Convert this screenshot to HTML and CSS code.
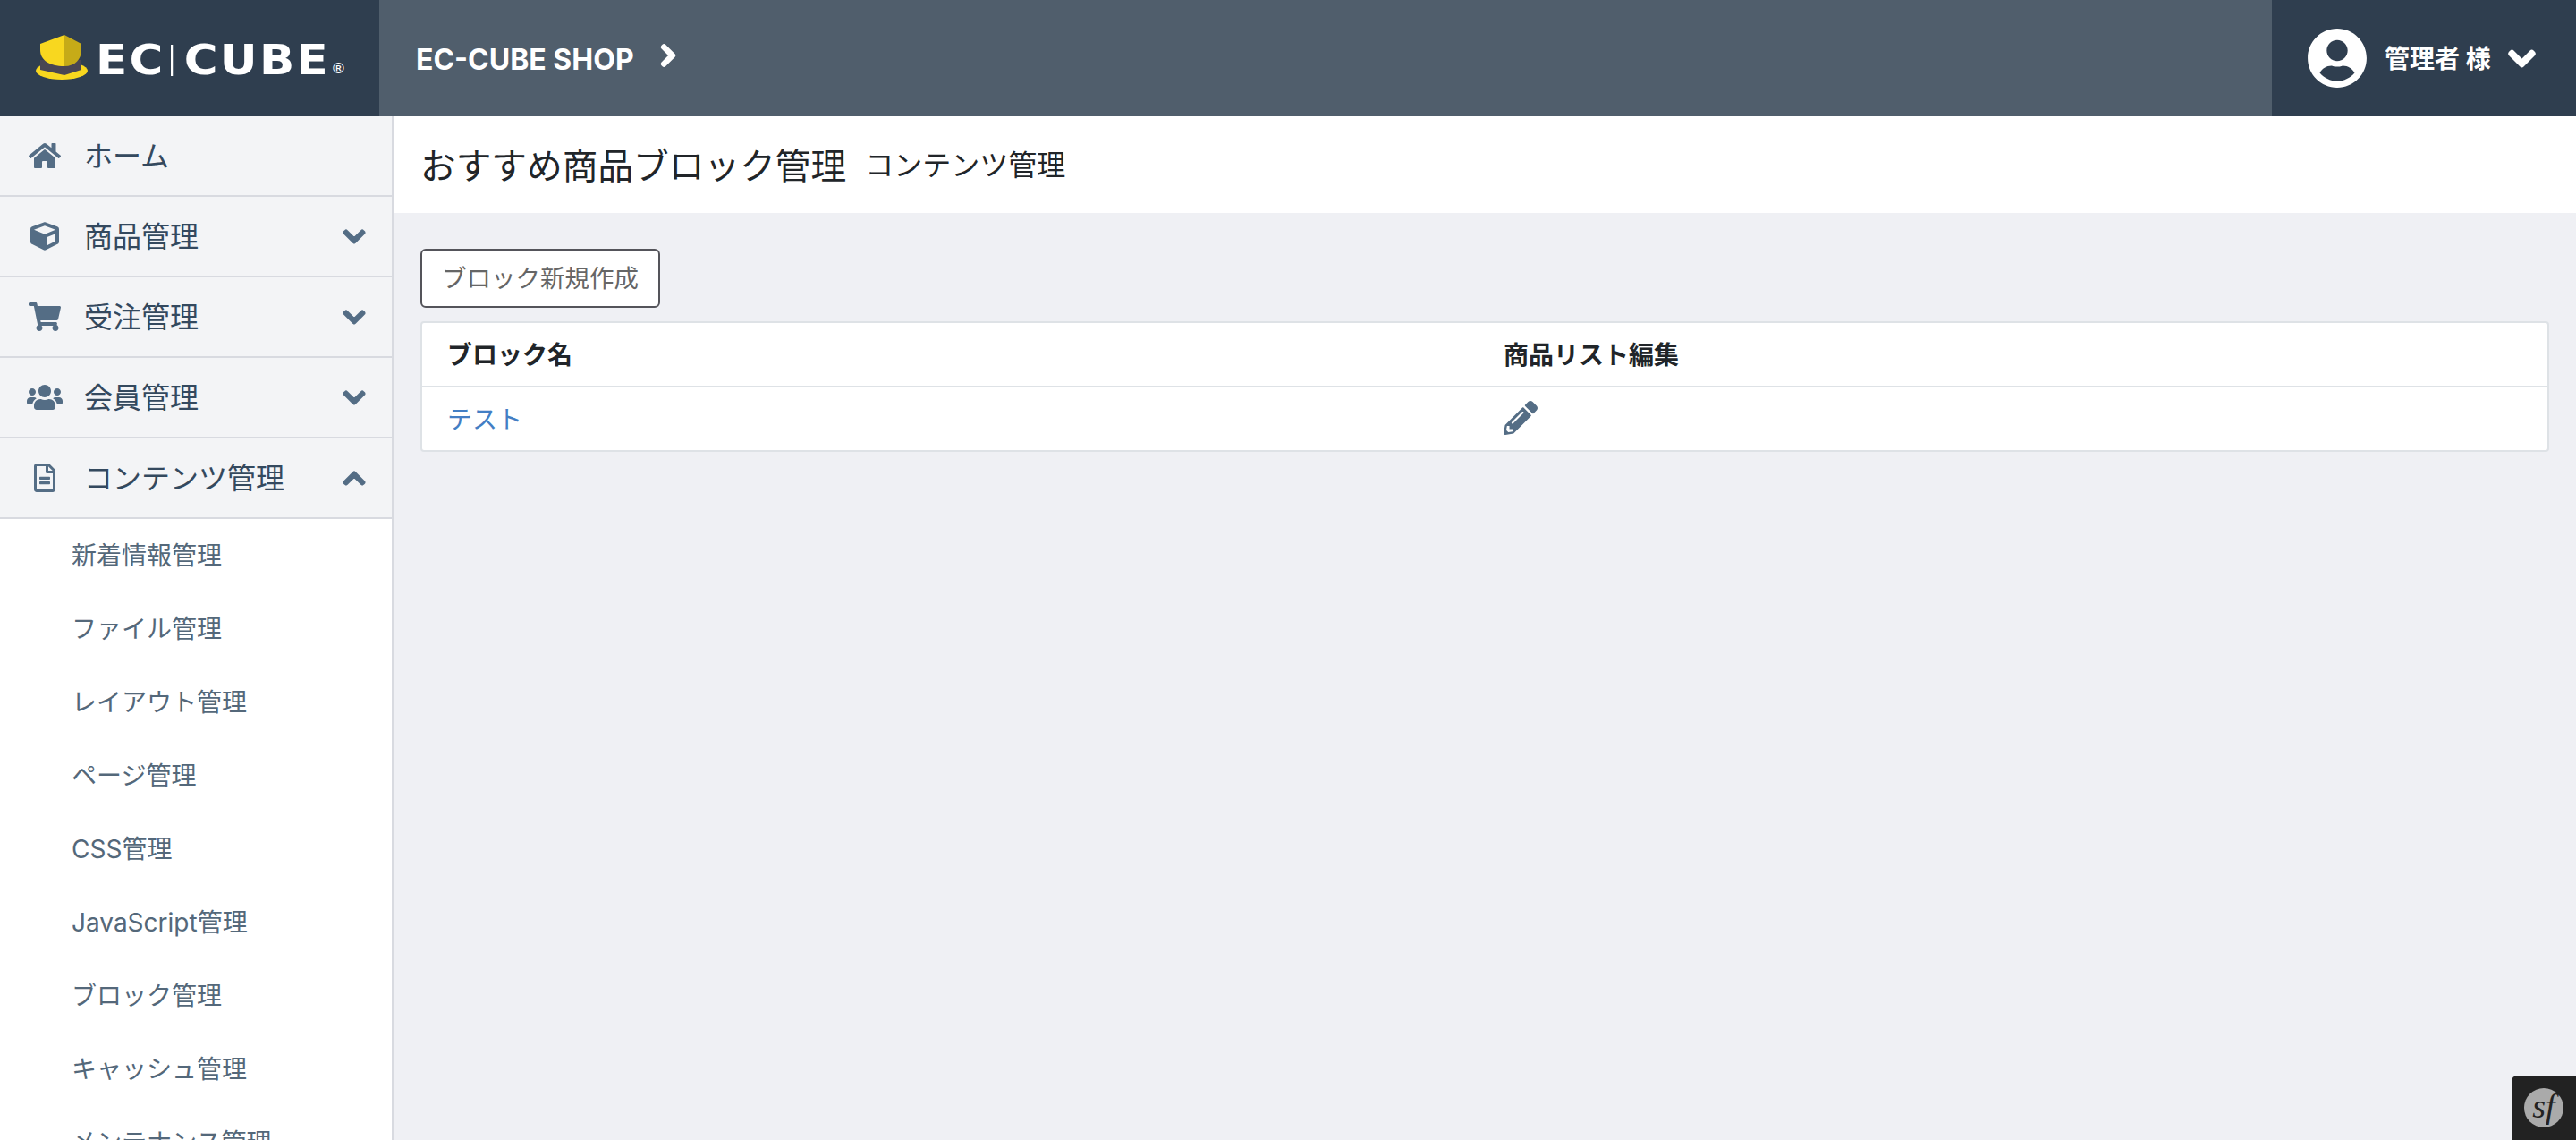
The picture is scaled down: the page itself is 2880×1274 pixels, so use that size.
FILE: index.html
```html
<!DOCTYPE html>
<html lang="ja">
<head>
  <meta charset="UTF-8" />
  <meta name="viewport" content="width=device-width, initial-scale=1.0"/>
  <title>おすすめ商品ブロック管理</title>

  <link rel="stylesheet" href="styles.css">
</head>
<body>

  <header class="topbar">
    <a class="brand" href="#">
      <svg class="brand-hat" viewBox="0 0 58 50">
        <ellipse cx="29" cy="40" rx="29" ry="10" fill="#f8d71f"/>
        <path d="M5 28h46v11l-19 6-27-6z" fill="#4a4653"/>
        <path d="M5 10 32 0v35C15 35 5 28 5 17z" fill="#f8d71f"/>
        <path d="M32 0l19 10v7c0 10-7 18-19 18z" fill="#c6ab18"/>
      </svg>
      <span class="brand-name">EC<i class="brand-bar"></i>CUBE<sup>®</sup></span>
    </a>
    <a class="shop" href="#">
      <span>EC-CUBE SHOP</span>
      <svg class="shop-arrow" viewBox="0 0 320 512"><path d="M285.476 272.971L91.132 467.314c-9.373 9.373-24.569 9.373-33.941 0l-22.667-22.667c-9.357-9.357-9.375-24.522-.04-33.901L188.505 256 34.484 101.255c-9.335-9.379-9.317-24.544.04-33.901l22.667-22.667c9.373-9.373 24.569-9.373 33.941 0L285.475 239.03c9.373 9.372 9.373 24.568.001 33.941z"/></svg>
    </a>
    <a class="account" href="#">
      <svg class="account-icon" viewBox="0 0 496 512"><path d="M248 8C111 8 0 119 0 256s111 248 248 248 248-111 248-248S385 8 248 8zm0 96c48.6 0 88 39.4 88 88s-39.4 88-88 88-88-39.4-88-88 39.4-88 88-88zm0 344c-58.7 0-111.3-26.6-146.5-68.2 18.8-35.4 55.6-59.8 98.5-59.8 2.4 0 4.8.4 7.1 1.1 13 4.2 26.6 6.9 40.9 6.9 14.3 0 28-2.7 40.9-6.9 2.3-.7 4.7-1.1 7.1-1.1 42.9 0 79.7 24.4 98.5 59.8C359.3 421.4 306.7 448 248 448z"/></svg>
      <span>管理者 様</span>
      <svg class="account-arrow" viewBox="0 0 448 512"><path d="M207.029 381.476L12.686 187.132c-9.373-9.373-9.373-24.569 0-33.941l22.667-22.667c9.357-9.357 24.522-9.375 33.901-.04L224 284.505l154.745-154.021c9.379-9.335 24.544-9.317 33.901.04l22.667 22.667c9.373 9.373 9.373 24.569 0 33.941L240.971 381.476c-9.373 9.372-24.569 9.372-33.942 0z"/></svg>
    </a>
  </header>

  <div class="layout">
    <nav class="sidebar">
      <a class="nav-item" href="#">
        <span class="nav-icon"><svg width="36" height="32" viewBox="0 0 576 512"><path d="M280.37 148.26L96 300.11V464a16 16 0 0 0 16 16l112.06-.29a16 16 0 0 0 15.92-16V368a16 16 0 0 1 16-16h64a16 16 0 0 1 16 16v95.64a16 16 0 0 0 16 16.05L464 480a16 16 0 0 0 16-16V300L295.67 148.26a12.19 12.19 0 0 0-15.3 0zM571.6 251.47L488 182.56V44.05a12 12 0 0 0-12-12h-56a12 12 0 0 0-12 12v72.61L318.47 43a48 48 0 0 0-61 0L4.34 251.47a12 12 0 0 0-1.6 16.9l25.5 31A12 12 0 0 0 45.15 301l235.22-193.74a12.19 12.19 0 0 1 15.3 0L530.9 301a12 12 0 0 0 16.9-1.6l25.5-31a12 12 0 0 0-1.7-16.93z"/></svg></span>
        <span class="nav-label">ホーム</span>
      </a>
      <a class="nav-item" href="#">
        <span class="nav-icon"><svg width="32" height="32" viewBox="0 0 512 512"><path d="M239.1 6.3l-208 78c-18.7 7-31.1 25-31.1 45v225.1c0 18.2 10.3 34.8 26.5 42.9l208 104c13.5 6.8 29.4 6.8 42.9 0l208-104c16.3-8.1 26.5-24.8 26.5-42.9V129.3c0-20-12.4-37.9-31.1-44.9l-208-78C262 2.2 250 2.2 239.1 6.3zM256 68.4l192 72v1.1l-192 78-192-78v-1.1l192-72zm32 356V275.5l160-65v133.9l-160 80z"/></svg></span>
        <span class="nav-label">商品管理</span>
        <svg class="nav-arrow" viewBox="0 0 448 512"><path d="M207.029 381.476L12.686 187.132c-9.373-9.373-9.373-24.569 0-33.941l22.667-22.667c9.357-9.357 24.522-9.375 33.901-.04L224 284.505l154.745-154.021c9.379-9.335 24.544-9.317 33.901.04l22.667 22.667c9.373 9.373 9.373 24.569 0 33.941L240.971 381.476c-9.373 9.372-24.569 9.372-33.942 0z"/></svg>
      </a>
      <a class="nav-item" href="#">
        <span class="nav-icon"><svg width="36" height="32" viewBox="0 0 576 512"><path d="M528.12 301.319l47.273-208C578.806 78.301 567.391 64 551.99 64H159.208l-9.166-44.81C147.758 8.021 137.93 0 126.529 0H24C10.745 0 0 10.745 0 24v16c0 13.255 10.745 24 24 24h69.883l70.248 343.435C147.325 417.1 136 435.222 136 456c0 30.928 25.072 56 56 56s56-25.072 56-56c0-15.674-6.447-29.835-16.824-40h209.647C430.447 426.165 424 440.326 424 456c0 30.928 25.072 56 56 56s56-25.072 56-56c0-22.172-12.888-41.332-31.579-50.405l5.517-24.276c3.413-15.018-8.002-29.319-23.403-29.319H218.117l-6.545-32h293.145c11.206 0 20.92-7.754 23.403-18.681z"/></svg></span>
        <span class="nav-label">受注管理</span>
        <svg class="nav-arrow" viewBox="0 0 448 512"><path d="M207.029 381.476L12.686 187.132c-9.373-9.373-9.373-24.569 0-33.941l22.667-22.667c9.357-9.357 24.522-9.375 33.901-.04L224 284.505l154.745-154.021c9.379-9.335 24.544-9.317 33.901.04l22.667 22.667c9.373 9.373 9.373 24.569 0 33.941L240.971 381.476c-9.373 9.372-24.569 9.372-33.942 0z"/></svg>
      </a>
      <a class="nav-item" href="#">
        <span class="nav-icon"><svg width="40" height="32" viewBox="0 0 640 512"><path d="M96 224c35.3 0 64-28.7 64-64s-28.7-64-64-64-64 28.7-64 64 28.7 64 64 64zm448 0c35.3 0 64-28.7 64-64s-28.7-64-64-64-64 28.7-64 64 28.7 64 64 64zm32 32h-64c-17.6 0-33.5 7.1-45.1 18.6 40.3 22.1 68.9 62 75.1 109.4h66c17.7 0 32-14.3 32-32v-32c0-35.3-28.7-64-64-64zm-256 0c61.9 0 112-50.1 112-112S381.9 32 320 32 208 82.1 208 144s50.1 112 112 112zm76.8 32h-8.3c-20.8 10-43.9 16-68.5 16s-47.6-6-68.5-16h-8.3C179.6 288 128 339.6 128 403.2V432c0 26.5 21.5 48 48 48h288c26.5 0 48-21.5 48-48v-28.8c0-63.6-51.6-115.2-115.2-115.2zm-223.7-13.4C161.5 263.1 145.6 256 128 256H64c-35.3 0-64 28.7-64 64v32c0 17.7 14.3 32 32 32h65.9c6.3-47.4 34.9-87.3 75.2-109.4z"/></svg></span>
        <span class="nav-label">会員管理</span>
        <svg class="nav-arrow" viewBox="0 0 448 512"><path d="M207.029 381.476L12.686 187.132c-9.373-9.373-9.373-24.569 0-33.941l22.667-22.667c9.357-9.357 24.522-9.375 33.901-.04L224 284.505l154.745-154.021c9.379-9.335 24.544-9.317 33.901.04l22.667 22.667c9.373 9.373 9.373 24.569 0 33.941L240.971 381.476c-9.373 9.372-24.569 9.372-33.942 0z"/></svg>
      </a>
      <a class="nav-item" href="#">
        <span class="nav-icon"><svg width="24" height="32" viewBox="0 0 384 512"><path d="M288 248v28c0 6.6-5.4 12-12 12H108c-6.6 0-12-5.4-12-12v-28c0-6.6 5.4-12 12-12h168c6.6 0 12 5.4 12 12zm-12 72H108c-6.6 0-12 5.4-12 12v28c0 6.6 5.4 12 12 12h168c6.6 0 12-5.4 12-12v-28c0-6.6-5.4-12-12-12zm108-188.1V464c0 26.5-21.5 48-48 48H48c-26.5 0-48-21.5-48-48V48C0 21.5 21.5 0 48 0h204.1C264.8 0 277 5.1 286 14.1L369.9 98c9 8.9 14.1 21.2 14.1 33.9zm-128-80V128h76.1L256 51.9zM336 464V176H232c-13.3 0-24-10.7-24-24V48H48v416h288z"/></svg></span>
        <span class="nav-label">コンテンツ管理</span>
        <svg class="nav-arrow" viewBox="0 0 448 512"><path d="M240.971 130.524l194.343 194.343c9.373 9.373 9.373 24.569 0 33.941l-22.667 22.667c-9.357 9.357-24.522 9.375-33.901.04L224 227.495 69.255 381.516c-9.379 9.335-24.544 9.317-33.901-.04l-22.667-22.667c-9.373-9.373-9.373-24.569 0-33.941L207.03 130.525c9.372-9.373 24.568-9.373 33.941-.001z"/></svg>
      </a>
      <ul class="subnav">
        <li><a href="#">新着情報管理</a></li>
        <li><a href="#">ファイル管理</a></li>
        <li><a href="#">レイアウト管理</a></li>
        <li><a href="#">ページ管理</a></li>
        <li><a href="#">CSS管理</a></li>
        <li><a href="#">JavaScript管理</a></li>
        <li><a href="#">ブロック管理</a></li>
        <li><a href="#">キャッシュ管理</a></li>
        <li><a href="#">メンテナンス管理</a></li>
      </ul>
    </nav>

    <main class="main">
      <div class="page-header">
        <h1>おすすめ商品ブロック管理</h1>
        <small>コンテンツ管理</small>
      </div>
      <div class="page-body">
        <a class="btn" href="#">ブロック新規作成</a>
        <table class="block-table">
          <thead>
            <tr>
              <th class="col-name">ブロック名</th>
              <th>商品リスト編集</th>
            </tr>
          </thead>
          <tbody>
            <tr>
              <td><a href="#">テスト</a></td>
              <td><a class="edit" href="#"><svg width="38" height="38" viewBox="0 0 512 512"><path d="M497.9 142.1l-46.1 46.1c-4.7 4.7-12.3 4.7-17 0l-111-111c-4.7-4.7-4.7-12.3 0-17l46.1-46.1c18.7-18.7 49.1-18.7 67.9 0l60.1 60.1c18.8 18.7 18.8 49.1 0 67.9zM284.2 99.8L21.6 362.4.4 483.9c-2.9 16.4 11.4 30.6 27.8 27.8l121.5-21.3 262.6-262.6c4.7-4.7 4.7-12.3 0-17l-111-111c-4.8-4.7-12.4-4.7-17.1 0zM124.1 339.9c-5.5-5.5-5.5-14.3 0-19.8l154-154c5.5-5.5 14.3-5.5 19.8 0s5.5 14.3 0 19.8l-154 154c-5.5 5.5-14.3 5.5-19.8 0zM88 424h48v36.3l-64.5 11.3-31.1-31.1L51.7 376H88v48z"/></svg></a></td>
            </tr>
          </tbody>
        </table>
      </div>
    </main>
  </div>

  <div class="sf-toolbar"><span class="sf-logo">sf</span></div>

</body>
</html>
```

FILE: styles.css
```css
* {
  box-sizing: border-box;
}

html, body {
  height: 100%;
}

body {
  margin: 0;
  display: flex;
  flex-direction: column;
  overflow: hidden;
  font-family: Inter, "Noto Sans CJK JP", sans-serif;
  font-size: 28px;
  color: #212529;
  background-color: #eff0f4;
}

a {
  text-decoration: none;
}

/* top bar */
.topbar {
  display: flex;
  height: 130px;
  flex-shrink: 0;
  background-color: #505e6c;
  color: white;
}

.topbar a {
  color: white;
}

.brand {
  display: flex;
  align-items: center;
  width: 424px;
  padding-left: 40px;
  background-color: #2f3e4f;
}

.brand-hat {
  width: 58px;
  height: 50px;
  margin-top: -2px;
  flex-shrink: 0;
}

.brand-name {
  display: flex;
  align-items: center;
  margin: 4px 0 0 9px;
  font-family: "DejaVu Sans", sans-serif;
  font-weight: bold;
  font-size: 46px;
  line-height: 1;
  letter-spacing: 2px;
  transform: scaleX(1.12);
  transform-origin: left center;
}

.brand-name sup {
  font-size: 15px;
  font-weight: normal;
  letter-spacing: 0;
  margin: 20px 0 0 1px;
}

.brand-bar {
  width: 2px;
  height: 35px;
  margin: 0 11px 0 6px;
  background-color: white;
}

.shop {
  display: flex;
  align-items: center;
  flex: 1;
  padding: 3px 0 0 41px;
  font-size: 32px;
  font-weight: bold;
}

.shop-arrow {
  width: 18px;
  height: 28px;
  margin: -9px 0 0 29px;
  fill: white;
  stroke: white;
  stroke-width: 40;
  overflow: visible;
}

.account {
  display: flex;
  align-items: center;
  width: 340px;
  padding-left: 40px;
  background-color: #2f3e4f;
  font-weight: bold;
}

.account-icon {
  width: 66px;
  height: 68px;
  fill: white;
}

.account span {
  margin: 0 0 3px 20px;
}

.account-arrow {
  width: 29px;
  height: 33px;
  margin-left: 20px;
  fill: white;
  stroke: white;
  stroke-width: 40;
  overflow: visible;
}

/* side menu */
.layout {
  display: flex;
  flex: 1;
  min-height: 0;
}

.sidebar {
  width: 440px;
  flex-shrink: 0;
  overflow: hidden;
  background-color: white;
  border-right: 2px solid #d8dae0;
}

.nav-item {
  display: flex;
  align-items: center;
  height: 90px;
  padding: 0 30px 0 30px;
  background-color: #f3f4f6;
  border-bottom: 2px solid #d8dae0;
  color: #34495e;
  font-size: 32px;
}

.nav-icon {
  display: flex;
  justify-content: center;
  width: 40px;
  margin-right: 24px;
  fill: #546d85;
}

.nav-label {
  flex: 1;
  padding-bottom: 4px;
}

.nav-arrow {
  width: 24px;
  height: 27px;
  fill: #546d85;
  stroke: #546d85;
  stroke-width: 40;
  overflow: visible;
}

.subnav {
  list-style: none;
  margin: 0;
  padding: 0;
}

.subnav a {
  display: flex;
  align-items: center;
  height: 82px;
  padding: 0 0 4px 80px;
  color: #54687a;
}

/* main area */
.main {
  flex: 1;
  min-width: 0;
}

.page-header {
  display: flex;
  align-items: center;
  height: 108px;
  padding: 0 0 4px 30px;
  background-color: white;
}

.page-header h1 {
  margin: 0;
  font-size: 39.7px;
  font-weight: normal;
}

.page-header small {
  margin-left: 21px;
  font-size: 32px;
}

.page-body {
  padding: 40px 30px 0;
}

.btn {
  display: inline-block;
  height: 66px;
  padding: 0 22px;
  line-height: 62px;
  background-color: white;
  border: 2px solid #54545a;
  border-radius: 6px;
  color: #666;
  font-size: 27.5px;
}

.block-table {
  width: 100%;
  margin-top: 15px;
  border-collapse: separate;
  border-spacing: 0;
  background-color: white;
  border: 2px solid #dee2e6;
  border-radius: 4px;
}

.block-table th,
.block-table td {
  padding: 0 28px 3px;
  text-align: left;
}

.block-table th {
  height: 72px;
  border-bottom: 2px solid #dee2e6;
}

.block-table td {
  height: 70px;
}

.block-table .col-name {
  width: 1181px;
}

.block-table td a {
  color: #437ec4;
}

.edit {
  display: flex;
  fill: #546d85;
}

/* debug toolbar */
.sf-toolbar {
  position: fixed;
  right: 0;
  bottom: 0;
  display: flex;
  align-items: center;
  width: 72px;
  height: 72px;
  padding-left: 14px;
  background-color: #222;
  border-top-left-radius: 6px;
}

.sf-logo {
  width: 44px;
  height: 44px;
  border-radius: 50%;
  background-color: #aaa;
  color: #222;
  font-family: "Liberation Serif", serif;
  font-size: 38px;
  font-style: italic;
  line-height: 40px;
  text-align: center;
}
```
